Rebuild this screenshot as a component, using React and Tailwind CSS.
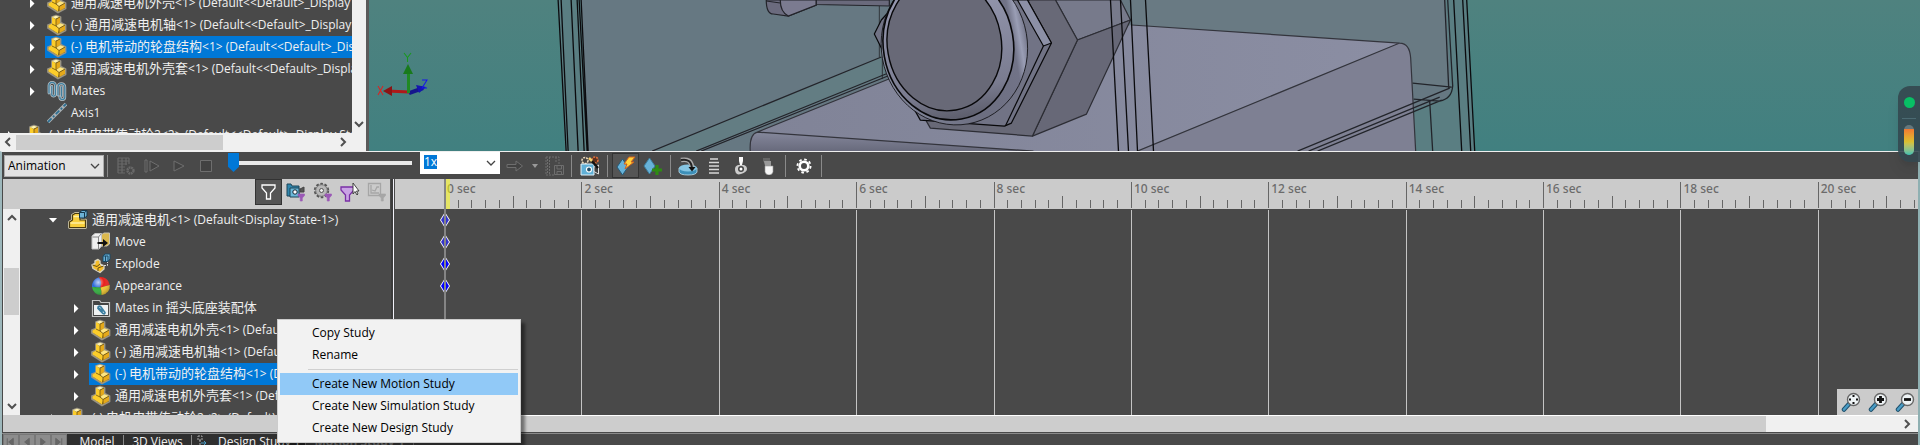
import React from "react";

const FONT = "font-['Open_Sans','Noto_Sans_CJK_SC',sans-serif]";

/* ---------- tree icons ---------- */
function PartIcon() {
  return (
    <svg width="20" height="22" viewBox="0 0 20 22" strokeLinejoin="round" className="shrink-0">
      <path d="M5 3 9 1.500 13.500 3V8.500L18.500 11V16.500L11 20.500 1 14V11L5 9.500Z" fill="#2f2a1c" stroke="#9a9482" strokeWidth="1.800" />
      <path d="M5 3 9 5V12L12.500 14.500 11 19.500 1.500 13.500V11.500L5 9.500Z" fill="#fccd2a" />
      <path d="M5 3 9 1.800 13 3 9 5Z" fill="#fff3b0" />
      <path d="M9 5 13 3V9L9 12Z" fill="#e5a91a" />
      <path d="M9 12 13 9 18 11 12 14.500Z" fill="#ffe680" />
      <path d="M12 14.500 18 11V16L11.500 19.500Z" fill="#e5a91a" />
      <path d="M9 5V12L12 14.500V19M9 5 13 3M12 14.500 18 11M5 10 9 12" fill="none" stroke="#6b5210" strokeWidth=".8" />
    </svg>
  );
}
function MatesIcon() {
  const d = "M2 13V5.500a3.200 3.200 0 0 1 6.400 0V15a2 2 0 0 1-3.600 0V6.500M11 15V7a3.200 3.200 0 0 1 6.800 0V17a2.500 2.500 0 0 1-5 0M14.500 7v9";
  return (
    <svg width="20" height="22" viewBox="0 0 20 22" fill="none" strokeLinecap="round" className="shrink-0">
      <path d={d} stroke="#b9c0c5" strokeWidth="2.800" />
      <path d={d} stroke="#3f7f9f" strokeWidth="1.300" />
    </svg>
  );
}
function AxisIcon() {
  return (
    <svg width="20" height="22" viewBox="0 0 20 22" className="shrink-0">
      <path d="M1 20 19 2" stroke="#a9b0b4" strokeWidth="3.600" />
      <path d="M1 20 19 2" stroke="#2e6f92" strokeWidth="1.800" strokeDasharray="5 2 2 2" />
    </svg>
  );
}
function SubassemblyIcon() {
  return (
    <svg width="20" height="22" viewBox="0 0 20 22" strokeLinejoin="round" className="shrink-0">
      <path d="M1.500 18.500V13L4.500 11V6L7 4.500H12V11H17.500V18.500Z" fill="#f4c631" stroke="#e9e0bb" strokeWidth="2.600" />
      <path d="M1.500 18.500V13L4.500 11V6L7 4.500H12V11H17.500V18.500Z" fill="#f8cf3c" stroke="#4a3b10" strokeWidth="1.200" />
      <path d="M2.500 14H16.500M5.500 7.500H11" stroke="#fff0a0" strokeWidth="1.400" />
      <path d="M11.500 3.500 14 1.500H19V7L16.500 9H11.500Z" fill="#6cb2d6" stroke="#17384c" />
      <path d="M11.500 3.500H16.500V9M16.500 3.500 19 1.500" stroke="#17384c" fill="none" />
    </svg>
  );
}
function MoveIcon() {
  return (
    <svg width="20" height="22" viewBox="0 0 20 22" strokeLinejoin="round" className="shrink-0">
      <path d="M10 4 13 2H18.500V13L16 15H10Z" fill="#dcb94e" stroke="#c9c3b0" />
      <path d="M1 5 4 2.500H10.500V15L8 18H1Z" fill="#f1f1f1" stroke="#c4c4c4" />
      <path d="M1.500 6H7.500V18M7.500 6 10 3" stroke="#888" fill="none" />
      <path d="M6.500 11H12V8L17 12 12 16V13H6.500Z" fill="#111" />
    </svg>
  );
}
function ExplodeIcon() {
  return (
    <svg width="20" height="22" viewBox="0 0 20 22" strokeLinejoin="round" className="shrink-0">
      <path d="M1 12 4 10.500V8L7 6.500 9 8V11L13 13V16L9 19.500 2 15.500Z" fill="#f5bd28" stroke="#d9d2bb" strokeWidth="1.400" />
      <path d="M1.500 12 6 13.500 9 11M7 18V15L12.500 13" stroke="#6b5210" fill="none" />
      <path d="M12 3 14 1H19V6L17 8.500H12Z" fill="#69aed3" stroke="#1c4a66" />
      <path d="M12 3H17V8M14.500 3V8" stroke="#1c4a66" fill="none" />
      <path d="M10 12.500H16.500V9" stroke="#d8d8d8" fill="none" strokeDasharray="2 1" />
    </svg>
  );
}
function AppearanceIcon() {
  return (
    <svg width="20" height="22" viewBox="0 0 20 22" className="shrink-0">
      <defs>
        <radialGradient id="shine" cx=".35" cy=".3" r=".8">
          <stop offset="0" stopColor="#fff" stopOpacity=".7" />
          <stop offset=".4" stopColor="#fff" stopOpacity="0" />
          <stop offset="1" stopColor="#000" stopOpacity=".35" />
        </radialGradient>
      </defs>
      <path d="M8 2.200A9 9 0 0 0 1 12L9.500 12.500Q11 6 8 2.200Z" fill="#2d68d8" />
      <path d="M8 2.200Q11 6 9.500 12.500L18.800 10A9 9 0 0 0 8 2.200Z" fill="#e8201c" />
      <path d="M1 12A9 9 0 0 0 10.500 20Q11 16 9.500 12.500Z" fill="#2fae3c" />
      <path d="M18.800 10A9 9 0 0 1 10.500 20Q11 16 9.500 12.500Z" fill="#f3c62b" />
      <circle cx="10" cy="11" r="9" fill="url(#shine)" />
    </svg>
  );
}
function MatesFolderIcon() {
  return (
    <svg width="20" height="22" viewBox="0 0 20 22" className="shrink-0">
      <path d="M1.500 19.500V3.500H8.500L10 5.500H18.500V19.500Z" fill="#444" stroke="#c4c4c4" strokeWidth="1.200" />
      <path d="M3 8H17V18H3Z" fill="#f0f2f3" />
      <path d="M6.500 11 12 16.500q2 1 2-1L9.500 9.500q-2-1-2.500.8L12 14.500" fill="none" stroke="#3a7da0" strokeWidth="1.600" />
    </svg>
  );
}

/* Latin and Han runs have their own sizes, as in the native tree control. */
function Label({ text }) {
  return (
    <span className="whitespace-pre text-xs">
      {text.split(/([\u4e00-\u9fff]+)/).map((run, i) =>
        i % 2 ? <span key={i} className="text-[13px]">{run}</span> : run
      )}
    </span>
  );
}

function Row({ indent, icon, text, expander, selected }) {
  return (
    <li className={`flex h-[22px] shrink-0 items-center text-[#f0f0f0] ${indent}`}>
      {expander ? (
        <button type="button" aria-label={`Toggle ${text}`} className="w-[17px] shrink-0">
          <svg width="9" height="9" viewBox="0 0 9 9" fill="#fff">
            {expander === "open" ? <path d="M0 2H8L4 6.500Z" /> : <path d="M2 0 6.500 4.500 2 9Z" />}
          </svg>
        </button>
      ) : (
        <span className="w-[17px] shrink-0" />
      )}
      <span className={`flex h-[22px] grow items-center gap-1 overflow-hidden pl-0.5 ${selected ? "bg-[#0078d7]" : ""}`}>
        {icon}
        <Label text={text} />
      </span>
    </li>
  );
}

function Chevron({ dir, className = "" }) {
  const d = { left: "M7 1 3 5 7 9", right: "M3 1 7 5 3 9", up: "M1 7 5 3 9 7", down: "M1 3 5 7 9 3" }[dir];
  return (
    <svg width="10" height="10" viewBox="0 0 10 10" fill="none" stroke="#505050" strokeWidth="2" className={className}>
      <path d={d} />
    </svg>
  );
}

/* ---------- model viewport ---------- */
function Viewport() {
  return (
    <svg viewBox="370 0 1550 151" preserveAspectRatio="xMinYMin slice" className="block h-full w-full">
      <defs>
        <linearGradient id="bg" x2="0" y2="1"><stop stopColor="#4f827f" /><stop offset="1" stopColor="#418080" /></linearGradient>
        <linearGradient id="lip" x2="0" y2="1"><stop stopColor="#85889c" /><stop offset="1" stopColor="#686a7c" /></linearGradient>
        <linearGradient id="bevel" x2="0" y2="1"><stop stopColor="#9a9db5" /><stop offset=".8" stopColor="#7a7c90" /><stop offset="1" stopColor="#5c5d6b" /></linearGradient>
        <linearGradient id="fillet"><stop stopColor="#858a9e" /><stop offset=".6" stopColor="#6c6e80" /><stop offset=".9" stopColor="#717387" /><stop offset=".95" stopColor="#9a9eb5" /><stop offset="1" stopColor="#75778b" /></linearGradient>
        <linearGradient id="boxtop" x2="1"><stop stopColor="#808397" /><stop offset="1" stopColor="#8b8ea3" /></linearGradient>
      </defs>
      <rect x="370" width="1550" height="151" fill="url(#bg)" />
      <path d="M559 0H1467L1475 151H566Z" fill="#5a7e82" />
      <path d="M582 0H1446L1451 88Q1450 100 1436 101L1310 151H589Z" fill="#667882" />
      <path d="M1130 0H1446L1450 87 1413 84 1400 43 1132 25Z" fill="#697a83" />
      <path d="M653 151 882 57 890 74 697 151Z" fill="#637d83" />
      <g stroke="#23242a" strokeWidth="1.200" fill="none">
        <path d="M767 0Q767 14 774 14L789 16 817 5V0Z" fill="#6b6b7e" />
        <path d="M781 0Q781 12 789 16L817 5V0Z" fill="#7b7b90" />
        <path d="M767 1 781 3" />
        <path d="M817 0V4.500L890 6V0Z" fill="#6a6a7c" />
        <path d="M653 151 882 57M697 151 889 73M702 151 891 75" />
        <path d="M880 6V57M883 57V79" strokeWidth=".8" />
      </g>
      <path d="M751 151Q750 135 758 132L892 78 1132 25 1400 43 1137 151Z" fill="url(#boxtop)" />
      <path d="M751 151Q750 134 758 132L1034 151Z" fill="url(#lip)" />
      <path d="M1137 151 1400 43Q1410 43 1411 58L1416 151Z" fill="#7e8093" />
      <g stroke="#33343c" strokeWidth="1.200" fill="none">
        <path d="M751 151Q750 134 758 132L892 78M758 132 1034 151" />
        <path d="M1132 25 1400 43M1138 151 1400 43Q1410 43 1411 58L1416 151" />
      </g>
      <g stroke="#2c2d34" strokeWidth="1.200" strokeLinejoin="round">
        <path d="M1056 0H1121L1131 20 1078 40Z" fill="#777a8b" />
        <path d="M1078 40 1131 20 1087 114 1033 136Z" fill="#676877" />
        <path d="M927 121 931 128 1033 136 1078 40 1056 0H1030Z" fill="#686977" />
        <g stroke="#08080a">
          <path d="M875 34 882 20 900 0H1028L1052 43 1012 123 1005 126 921 120 913 106 882 48Z" fill="#717385" />
          <path d="M1018 0H1028L1052 43 1044 46Z" fill="#8c90a6" />
          <path d="M1044 46 1006 126" fill="none" />
        </g>
      </g>
      <ellipse cx="955" cy="46" rx="73" ry="79" transform="rotate(-10 955 46)" fill="url(#fillet)" stroke="#101014" strokeWidth=".8" />
      <ellipse cx="949" cy="45" rx="65" ry="75" transform="rotate(-10 949 45)" fill="url(#bevel)" stroke="#08080a" strokeWidth="1.600" />
      <ellipse cx="945" cy="44" rx="57" ry="67" transform="rotate(-10 945 44)" fill="#686977" stroke="#08080a" strokeWidth="1.400" />
      <g stroke="#0b0b0e" strokeWidth="1.300" fill="none">
        <path d="M559 0 567 151M562 0 569 151M572 0 579 151M578 0 585 151M580 0 588 151M582 0 589 151" />
        <path d="M1111 0 1119 151M1121 0 1129 151M1131 0 1138 151M1146 0 1154 151" />
        <path d="M1463 0 1471 151M1467 0 1475 151M1454 0 1462 151" />
      </g>
      <g stroke="#22242a" strokeWidth="1.300" fill="none">
        <path d="M1445 0 1449 88M1448 0 1453 86Q1452 99 1440 101L1414 99M1413 83 1452 87M1298 151 1450 88M1309 151 1440 97M1318 151 1442 100M1430 101 1433 151" />
      </g>
      <g strokeWidth="3">
        <path d="M410 92 388 91" stroke="#b01818" />
        <path d="M384 91 393 86V96Z" fill="#8c1414" />
        <path d="M410 93 424 88" stroke="#15158c" strokeWidth="4" />
        <path d="M427 87 417 85 420 93Z" fill="#1515b0" />
        <path d="M409.500 93V70" stroke="#1f8a24" />
        <path d="M409 64 404 74H414Z" fill="#187a1c" />
      </g>
      <g fill="none" strokeWidth="1">
        <path d="M379 86 384 95M384 86 379 95" stroke="#e02020" />
        <path d="M405 53 408.500 57.500 412 53M408.500 57.500V62" stroke="#169a1a" />
        <path d="M423 80H428L423 88H428" stroke="#1414ee" />
      </g>
    </svg>
  );
}

/* ---------- toolbar ---------- */
function Tool({ label, w, active, children }) {
  return (
    <button type="button" aria-label={label} className={`flex h-[25px] shrink-0 items-center justify-center ${w} ${active ? "border border-[#333] bg-[#555]" : ""}`}>
      {children}
    </button>
  );
}
const Sep = () => <span className="h-[22px] w-px shrink-0 bg-[#8a8a8a]" />;

function Toolbar() {
  return (
    <div className="flex h-[27px] shrink-0 items-center pl-0.5">
      <label className="relative flex shrink-0 items-center">
        <span className="sr-only">Study type</span>
        <select className="h-[22px] w-[100px] appearance-none border border-[#adadad] bg-[#e2e2e2] pl-[3px] text-xs text-black">
          <option>Animation</option>
        </select>
        <svg width="10" height="10" viewBox="0 0 10 10" fill="none" stroke="#444" strokeWidth="1.300" className="pointer-events-none absolute right-1"><path d="M1 3 5 7 9 3" /></svg>
      </label>
      <span className="ml-[3px] flex items-center"><Sep /></span>
      <div className="ml-1 flex items-center">
        <Tool label="Calculate" w="w-[27px]">
          <svg width="20" height="20" viewBox="0 0 20 20" fill="none" stroke="#696969" strokeWidth="1.200">
            <path d="M2 2H13M2 5H13M2 8H11M2 11H9M2 14H9M2 17H9M2 2V17M6 2V17M10 2V9M13 2V8" />
            <circle cx="14.500" cy="14.500" r="3" strokeWidth="2.400" strokeDasharray="1.800 .6" />
          </svg>
        </Tool>
        <Tool label="Play from start" w="w-[26px]"><svg width="18" height="14" viewBox="0 0 18 14" fill="#424242" stroke="#6e6e6e"><path d="M2 1V13H4V1ZM7 2 16 7 7 12Z" /></svg></Tool>
        <Tool label="Play" w="w-[27px]"><svg width="14" height="14" viewBox="0 0 14 14" fill="#424242" stroke="#6e6e6e"><path d="M2 2 12 7 2 12Z" /></svg></Tool>
        <Tool label="Stop" w="w-7"><svg width="14" height="14" viewBox="0 0 14 14" fill="#424242" stroke="#6e6e6e"><path d="M1.500 1.500H12.500V12.500H1.500Z" /></svg></Tool>
      </div>
      <input
        type="range"
        aria-label="Playback position"
        defaultValue="0"
        className="ml-2 h-[22px] w-[184px] appearance-none self-start bg-transparent [&::-webkit-slider-runnable-track]:h-1 [&::-webkit-slider-runnable-track]:bg-[#e9e9e9] [&::-webkit-slider-thumb]:-mt-2 [&::-webkit-slider-thumb]:h-[19px] [&::-webkit-slider-thumb]:w-[11px] [&::-webkit-slider-thumb]:appearance-none [&::-webkit-slider-thumb]:bg-[#0078d7] [&::-webkit-slider-thumb]:[clip-path:polygon(0_0,100%_0,100%_72%,50%_100%,0_72%)]"
      />
      <div className="ml-2 flex h-[22px] w-20 shrink-0 items-start self-start bg-white px-1">
        <input aria-label="Playback speed" defaultValue="1x" className="mt-[3px] h-[14px] w-[13px] bg-[#0078d7] text-xs text-white" />
        <button type="button" aria-label="Choose speed" className="ml-auto self-center">
          <svg width="10" height="10" viewBox="0 0 10 10" fill="none" stroke="#444" strokeWidth="1.300"><path d="M1 3 5 7 9 3" /></svg>
        </button>
      </div>
      <Tool label="Playback mode" w="w-[30px]"><svg width="18" height="14" viewBox="0 0 18 14" fill="#424242" stroke="#6e6e6e"><path d="M1 5.500H10V2L16.500 7 10 12V8.500H1Z" /></svg></Tool>
      <Tool label="Playback mode options" w="w-[9px]"><svg width="6" height="4" viewBox="0 0 6 4" fill="#999"><path d="M0 0H6L3 4Z" /></svg></Tool>
      <Tool label="Save animation" w="w-[32px]">
        <svg width="20" height="20" viewBox="0 0 20 20" fill="none" stroke="#6e6e6e"><path d="M1 1H14V8M1 1V19H9M4.500 1V19M11 1V7M2.500 3V18" strokeDasharray="2 1" /><path d="M9.500 9.500H18.500V18.500H9.500ZM12 9.500V13H16.500V9.500M12 18V15.500H16.500V18" /></svg>
      </Tool>
      <Sep />
      <Tool label="Animation wizard" w="w-[35px]">
        <svg width="20" height="20" viewBox="0 0 20 20">
          <circle cx="5" cy="4.500" r="3" fill="#444" stroke="#e9d7b8" strokeWidth="1.600" strokeDasharray="2 1" />
          <circle cx="15" cy="4" r="3" fill="#5a3020" stroke="#e2703a" strokeWidth="1.600" strokeDasharray="2 1" />
          <path d="M1 8H14V19H1Z" fill="#61b0d6" stroke="#e3f2fa" /><circle cx="9" cy="13.500" r="2.500" fill="#1f4c66" stroke="#fff" strokeWidth="1.200" />
          <path d="M14 11 18.500 9V18L14 15.500Z" fill="#3f3f3f" stroke="#ddd" />
          <path d="M10 3 18 12" stroke="#111" strokeWidth="2.500" /><path d="M9 2 12 5" stroke="#f4cf6e" strokeWidth="2.500" />
        </svg>
      </Tool>
      <Sep />
      <div className="mx-1 flex items-center">
        <Tool label="Autokey" w="w-[27px]" active>
          <svg width="20" height="20" viewBox="0 0 20 20"><path d="M6.500 3 12 11 6.500 19 1 11Z" fill="#67b2d8" stroke="#245a78" /><path d="M13 1H19L15 6H18L9 13 11 8H8Z" fill="#ffd23c" stroke="#d2601c" /></svg>
        </Tool>
        <Tool label="Add or update key" w="w-[27px]">
          <svg width="20" height="20" viewBox="0 0 20 20"><path d="M6.500 2 12 10 6.500 18 1 10Z" fill="#67b2d8" stroke="#3d7f9f" /><path d="M14 9V19M9 14H19" stroke="#2e8b13" strokeWidth="3.200" /></svg>
        </Tool>
      </div>
      <Sep />
      <div className="mx-1 flex items-center">
        <Tool label="Motor" w="w-[25px]">
          <svg width="20" height="20" viewBox="0 0 20 20"><path d="M1 12V16Q2 19 10 19T19 16V12Z" fill="#3d8fb8" stroke="#bfe0ef" strokeWidth=".8" /><ellipse cx="10" cy="12" rx="9" ry="3.500" fill="#86c5e2" /><path d="M3 4Q13 2 14 11" stroke="#aaa" strokeWidth="4.500" fill="none" /><path d="M3 4Q13 2 14 12" stroke="#222" strokeWidth="2" fill="none" /><path d="M10.500 11H17.500L14 15.500Z" fill="#111" /></svg>
        </Tool>
        <Tool label="Spring" w="w-[27px]">
          <svg width="14" height="18" viewBox="0 0 14 18" fill="none" stroke="#d6d6d6" strokeWidth="1.500"><path d="M3 2H11M2 5.500H12M2 9H12M2 12.500H12M2 16H12" /></svg>
        </Tool>
        <Tool label="Contact" w="w-[27px]">
          <svg width="14" height="18" viewBox="0 0 14 18"><path d="M5 0H9V4L8 8H6L5 4Z" fill="#fafafa" /><path d="M1 12Q1 9 4 8L10 8Q13 9 13 12T7 17 1 12Z" fill="#ccc" /><circle cx="7" cy="12" r="3" fill="#444" /><circle cx="7" cy="12" r="1.500" fill="#fff" /></svg>
        </Tool>
        <Tool label="Gravity" w="w-[27px]">
          <svg width="14" height="18" viewBox="0 0 14 18"><path d="M2 1H9V8H5L2 4Z" fill="#666" /><path d="M3 4H10V9H4Z" fill="#999" /><path d="M4 9H12V15Q11 18 8 18T4 15Z" fill="#f6f6f6" stroke="#999" strokeWidth=".6" /></svg>
        </Tool>
      </div>
      <Sep />
      <Tool label="Motion study properties" w="w-[35px]">
        <svg width="16" height="16" viewBox="0 0 16 16" fill="none" stroke="#fff"><circle cx="8" cy="8" r="4.300" strokeWidth="2.600" /><circle cx="8" cy="8" r="6.600" strokeWidth="1.800" strokeDasharray="2.600 2.580" /></svg>
      </Tool>
      <Sep />
    </div>
  );
}

const Funnel = ({ x = 0, y = 0, s = 1, fill = "none", stroke = "#fff" }) => (
  <path transform={`translate(${x} ${y}) scale(${s})`} d="M0 0H13V3L8.500 8V14H4.500V8L0 3Z" fill={fill} stroke={stroke} strokeWidth="1.300" />
);

function FilterBar() {
  const button = "flex h-[26px] w-[27px] items-center justify-center";
  return (
    <div className="flex h-[30px] shrink-0 items-start justify-end bg-[#cbcbcb]">
      <button type="button" aria-label="No filter" className={`${button} border border-[#333] bg-[#555]`}>
        <svg width="16" height="16" viewBox="-1 -1 16 16"><Funnel /></svg>
      </button>
      <button type="button" aria-label="Filter animated" className={button}>
        <svg width="20" height="20" viewBox="0 0 20 20"><path d="M1 2H5L6 4H13V14H1Z" fill="#2f86ad" stroke="#1c4558" /><path d="M4 6H13V15H4Z" fill="#6cbadb" stroke="#1c4558" /><circle cx="9" cy="10" r="2.200" fill="#fff" stroke="#123" /><path d="M14 7 18 5V10H14Z" fill="#555" stroke="#444" /><Funnel x={12} y={12} s={0.5} fill="#9b59b6" stroke="#9b59b6" /></svg>
      </button>
      <button type="button" aria-label="Filter driving" className={button}>
        <svg width="20" height="20" viewBox="0 0 20 20" fill="none"><circle cx="8.500" cy="8.500" r="6.500" stroke="#555" strokeWidth="2.400" strokeDasharray="2.500 1.600" /><circle cx="8.500" cy="8.500" r="5.800" fill="#b8b8b8" stroke="#777" /><circle cx="8.500" cy="8.500" r="2" fill="#eee" stroke="#555" /><Funnel x={12} y={12} s={0.5} fill="#9b59b6" stroke="#9b59b6" /></svg>
      </button>
      <button type="button" aria-label="Filter selected" className={button}>
        <svg width="20" height="20" viewBox="0 0 20 20"><Funnel x={1} y={5} fill="#c9a3e4" stroke="#7a2fa6" /><path d="M13 1V12L15 9.500 17 13 18 12 16.500 9H19Z" fill="#fff" stroke="#333" strokeWidth=".9" /></svg>
      </button>
      <button type="button" aria-label="Filter results" className={button}>
        <svg width="20" height="20" viewBox="0 0 20 20" fill="none" stroke="#a6a6a6"><path d="M1.500 1.500H13.500V13.500H1.500ZM4 3V11H12M5 8 8 9 10 5H12" strokeWidth="1.300" /><Funnel x={12} y={12} s={0.5} fill="#a6a6a6" stroke="#a6a6a6" /></svg>
      </button>
    </div>
  );
}

/* ---------- timeline ---------- */
const SECONDS = [0, 2, 4, 6, 8, 10, 12, 14, 16, 18, 20];
const KEYS = ["fill-[#3333cc]", "fill-[#3333cc]", "fill-[#0000ff]", "fill-[#0000ff]"];

function Ruler() {
  return (
    <div className="flex h-[30px] shrink-0 overflow-hidden bg-[#cbcbcb] pl-[49px]">
      {SECONDS.map((s) => (
        <div key={s} className="relative flex h-full w-[9.32%] shrink-0 items-end pb-px">
          {Array.from({ length: 10 }, (_, i) => (
            <span key={i} className={`flex-1 border-l border-[#666] ${i === 0 ? "h-[26px]" : i === 5 ? "h-3" : "h-2"}`} />
          ))}
          <span className="absolute left-[3px] top-0.5 font-['Noto_Sans',sans-serif] text-xs font-medium text-[#6b6b6b]">{s} sec</span>
        </div>
      ))}
    </div>
  );
}

function Magnifier({ label, d, dots }) {
  return (
    <button type="button" aria-label={label} className="flex h-[26px] w-[27px] items-center justify-center">
      <svg width="20" height="20" viewBox="0 0 20 20">
        <path d="M3 17.500 8 12" stroke="#1d4f6b" strokeWidth="4.500" strokeLinecap="round" />
        <path d="M3 17.500 8 12" stroke="#4a9cc5" strokeWidth="2.600" strokeLinecap="round" />
        <circle cx="12.500" cy="7.500" r="6" fill="#eef3f5" stroke="#666" strokeWidth="1.400" />
        <path d={d} stroke="#111" strokeWidth={dots ? 2 : 2.8} />
      </svg>
    </button>
  );
}

function Timeline() {
  return (
    <div className="relative flex min-w-0 grow flex-col">
      <div className="relative shrink-0">
        <span className="absolute left-[51px] top-0 z-10 h-[30px] w-1 bg-[#ffff00]/50" />
        <Ruler />
      </div>
      <div className="flex grow overflow-hidden pl-[49px] pt-px">
        {SECONDS.map((s) => (
          <span key={s} className={`w-[9.32%] shrink-0 border-l ${s ? "border-[#c4c4c4]" : "border-transparent"}`} />
        ))}
      </div>
      <span className="absolute bottom-[17px] left-[49px] top-0 w-0.5 bg-[#858585]" />
      <ul className="absolute left-[45px] top-[30px]">
        {KEYS.map((fill, i) => (
          <li key={i} className="flex h-[22px] items-center">
            <svg width="10" height="16" viewBox="0 0 10 16">
              <path d="M5 0 10 8 5 16 0 8Z" fill="#fff" />
              <path d="M5 1.500 9 8 5 14.500 1 8Z" className={fill} />
              <path d="M4 0H6V16H4Z" fill="#858585" />
            </svg>
          </li>
        ))}
      </ul>
      <div className="absolute bottom-[17px] right-0 flex bg-[#cbcbcb]">
        <Magnifier label="Zoom to fit" d="M12.500 3V5M12.500 10V12M8 7.500H10M15 7.500H17" dots />
        <Magnifier label="Zoom in" d="M12.500 4V11M9 7.500H16" />
        <Magnifier label="Zoom out" d="M9 7.500H16" />
      </div>
      <div className="flex h-[17px] shrink-0 items-stretch border-t border-white bg-[#f0f0f0]">
        <span className="w-[90%] bg-[#cdcdcd]" />
        <span className="grow" />
        <span className="flex w-4 items-center"><Chevron dir="right" /></span>
      </div>
    </div>
  );
}

function ContextMenu() {
  const item = "flex h-[22px] w-full items-center pl-[32px] text-left text-xs text-black";
  return (
    <div role="menu" className="absolute left-[277px] top-[319px] w-[244px] border border-[#ccc] bg-[#f2f2f2] p-0.5 pb-[3px] shadow-[4px_4px_3px_rgba(0,0,0,0.45)]">
      <button role="menuitem" type="button" className={item}>Copy Study</button>
      <button role="menuitem" type="button" className={item}>Rename</button>
      <div className="my-[3px] ml-[28px] h-px bg-[#d0d0d0]" />
      <button role="menuitem" type="button" className={`${item} bg-[#91c9f7]`}>Create New Motion Study</button>
      <button role="menuitem" type="button" className={item}>Create New Simulation Study</button>
      <button role="menuitem" type="button" className={item}>Create New Design Study</button>
    </div>
  );
}

const NAV = ["M10 3 5 7 10 11ZM3.500 3V11", "M10 3 5 7 10 11Z", "M5 3 10 7 5 11Z", "M4 3 9 7 4 11ZM10.500 3V11"];

export default function App() {
  return (
    <div className={`relative flex h-screen w-full flex-col overflow-hidden bg-[#494949] ${FONT}`}>
      {/* feature tree + model viewport */}
      <div className="flex h-[151px] shrink-0">
        <div className="flex w-[366px] shrink-0 flex-col">
          <div className="flex h-[133px]">
            <ul className="-mt-2 flex w-[352px] flex-col overflow-hidden">
              <Row indent="pl-7" expander="closed" icon={<PartIcon />} text="通用减速电机外壳<1> (Default<<Default>_Display State 1>)" />
              <Row indent="pl-7" expander="closed" icon={<PartIcon />} text="(-) 通用减速电机轴<1> (Default<<Default>_Display State 1>)" />
              <Row indent="pl-7" expander="closed" icon={<PartIcon />} selected text="(-) 电机带动的轮盘结构<1> (Default<<Default>_Display State 1>)" />
              <Row indent="pl-7" expander="closed" icon={<PartIcon />} text="通用减速电机外壳套<1> (Default<<Default>_Display State 1>)" />
              <Row indent="pl-7" expander="closed" icon={<MatesIcon />} text="Mates" />
              <Row indent="pl-7" icon={<AxisIcon />} text="Axis1" />
              <Row indent="pl-[6px]" expander="closed" icon={<PartIcon />} text="(-) 电机皮带传动轮2<2> (Default<<Default>_Display State 1>)" />
            </ul>
            <div className="flex w-[14px] items-end justify-center bg-[#f0f0f0] pb-1"><Chevron dir="down" /></div>
          </div>
          <div className="flex grow items-center bg-[#f0f0f0]">
            <Chevron dir="left" className="mx-[3px] shrink-0" />
            <span className="h-[15px] w-[207px] bg-[#cdcdcd]" />
            <span className="grow" />
            <Chevron dir="right" className="mr-[18px]" />
          </div>
        </div>
        <div className="min-w-0 grow border-l-[3px] border-[#5a5a5a]"><Viewport /></div>
      </div>

      {/* motion manager */}
      <div className="flex min-h-0 grow flex-col border-l-2 border-r-2 border-t border-l-[#9db7bb] border-r-[#8fb0b2] border-t-[#efefef]">
        <Toolbar />
        <div className="flex min-h-0 grow pl-px">
          <div className="flex w-[387px] shrink-0 flex-col">
            <FilterBar />
            <div className="flex min-h-0 grow overflow-hidden">
              <div className="flex w-[17px] shrink-0 flex-col items-center bg-[#f0f0f0] py-1">
                <Chevron dir="up" />
                <span className="mt-[45px] h-[47px] w-[15px] bg-[#cdcdcd]" />
                <Chevron dir="down" className="mt-auto" />
              </div>
              <ul className="flex h-0 min-h-full min-w-0 grow flex-col overflow-hidden">
                <Row indent="pl-[29px]" expander="open" icon={<SubassemblyIcon />} text="通用减速电机<1> (Default<Display State-1>)" />
                <Row indent="pl-[52px]" icon={<MoveIcon />} text="Move" />
                <Row indent="pl-[52px]" icon={<ExplodeIcon />} text="Explode" />
                <Row indent="pl-[52px]" icon={<AppearanceIcon />} text="Appearance" />
                <Row indent="pl-[52px]" expander="closed" icon={<MatesFolderIcon />} text="Mates in 摇头底座装配体" />
                <Row indent="pl-[52px]" expander="closed" icon={<PartIcon />} text="通用减速电机外壳<1> (Default)" />
                <Row indent="pl-[52px]" expander="closed" icon={<PartIcon />} text="(-) 通用减速电机轴<1> (Default)" />
                <Row indent="pl-[52px]" expander="closed" icon={<PartIcon />} selected text="(-) 电机带动的轮盘结构<1> (Default)" />
                <Row indent="pl-[52px]" expander="closed" icon={<PartIcon />} text="通用减速电机外壳套<1> (Default)" />
                <Row indent="pl-[29px]" expander="closed" icon={<PartIcon />} text="(-) 电机皮带传动轮2<2> (Default)" />
              </ul>
            </div>
            <div className="h-[17px] shrink-0 bg-[#cdcdcd]" />
          </div>
          <div className="mx-px w-[3px] shrink-0 border-r border-[#f0f0f8] bg-[#3c3c3c]" />
          <Timeline />
        </div>

        <div className="mt-px flex h-3 shrink-0 items-start overflow-hidden border-t border-[#8a8a8a] pl-px text-xs text-[#f0f0f0]">
          {NAV.map((d, i) => (
            <button key={i} type="button" aria-label={["First", "Previous", "Next", "Last"][i]} className="h-4 w-4 shrink-0 border border-[#777] bg-[#8c8c8c]">
              <svg width="13" height="14" viewBox="0 0 14 14" fill="#666" stroke="#666"><path d={d} /></svg>
            </button>
          ))}
          <div className="flex h-4 items-center bg-[#2f2f2f]">
            <button type="button" className="h-[14px] w-[57px] border-r border-[#8a8a8a] pl-1 leading-[14px]">Model</button>
            <button type="button" className="h-[14px] w-[68px] border-r border-[#8a8a8a] leading-[14px]">3D Views</button>
            <button type="button" className="flex h-[14px] w-[114px] items-center gap-2 border-r border-[#8a8a8a] pl-1 leading-[14px]">
              <svg width="14" height="14" viewBox="0 0 14 14" fill="none" stroke="#aaa"><path d="M2 1H6V5H2ZM4 5V14" strokeDasharray="2 1" /><path d="M5 8H10M8 6 10 8 8 10" stroke="#4a9cc5" /></svg>
              <span className="whitespace-nowrap">Design Study 1</span>
            </button>
          </div>
          <button type="button" className="h-4 w-[108px] border-r border-[#8a8a8a] font-bold leading-4 text-[#a0a0a0]">Motion Study 1</button>
        </div>
      </div>

      <ContextMenu />

      {/* floating recorder widget */}
      <div className="absolute right-0 top-[86px] flex h-[76px] w-[22px] flex-col items-center rounded-l-xl bg-[#34474f]/90 pt-[11px] shadow-lg">
        <span className="h-[11px] w-[11px] rounded-full bg-[#08c065]" />
        <span className="mt-[10px] h-px w-[14px] bg-[#4b6a72]" />
        <span className="mt-[6px] h-[30px] w-[10px] overflow-hidden rounded-full bg-[#65777c] pt-1">
          <span className="block h-full bg-linear-to-b from-[#f07830] via-[#d8c030] to-[#30c0b0]" />
        </span>
      </div>
    </div>
  );
}
